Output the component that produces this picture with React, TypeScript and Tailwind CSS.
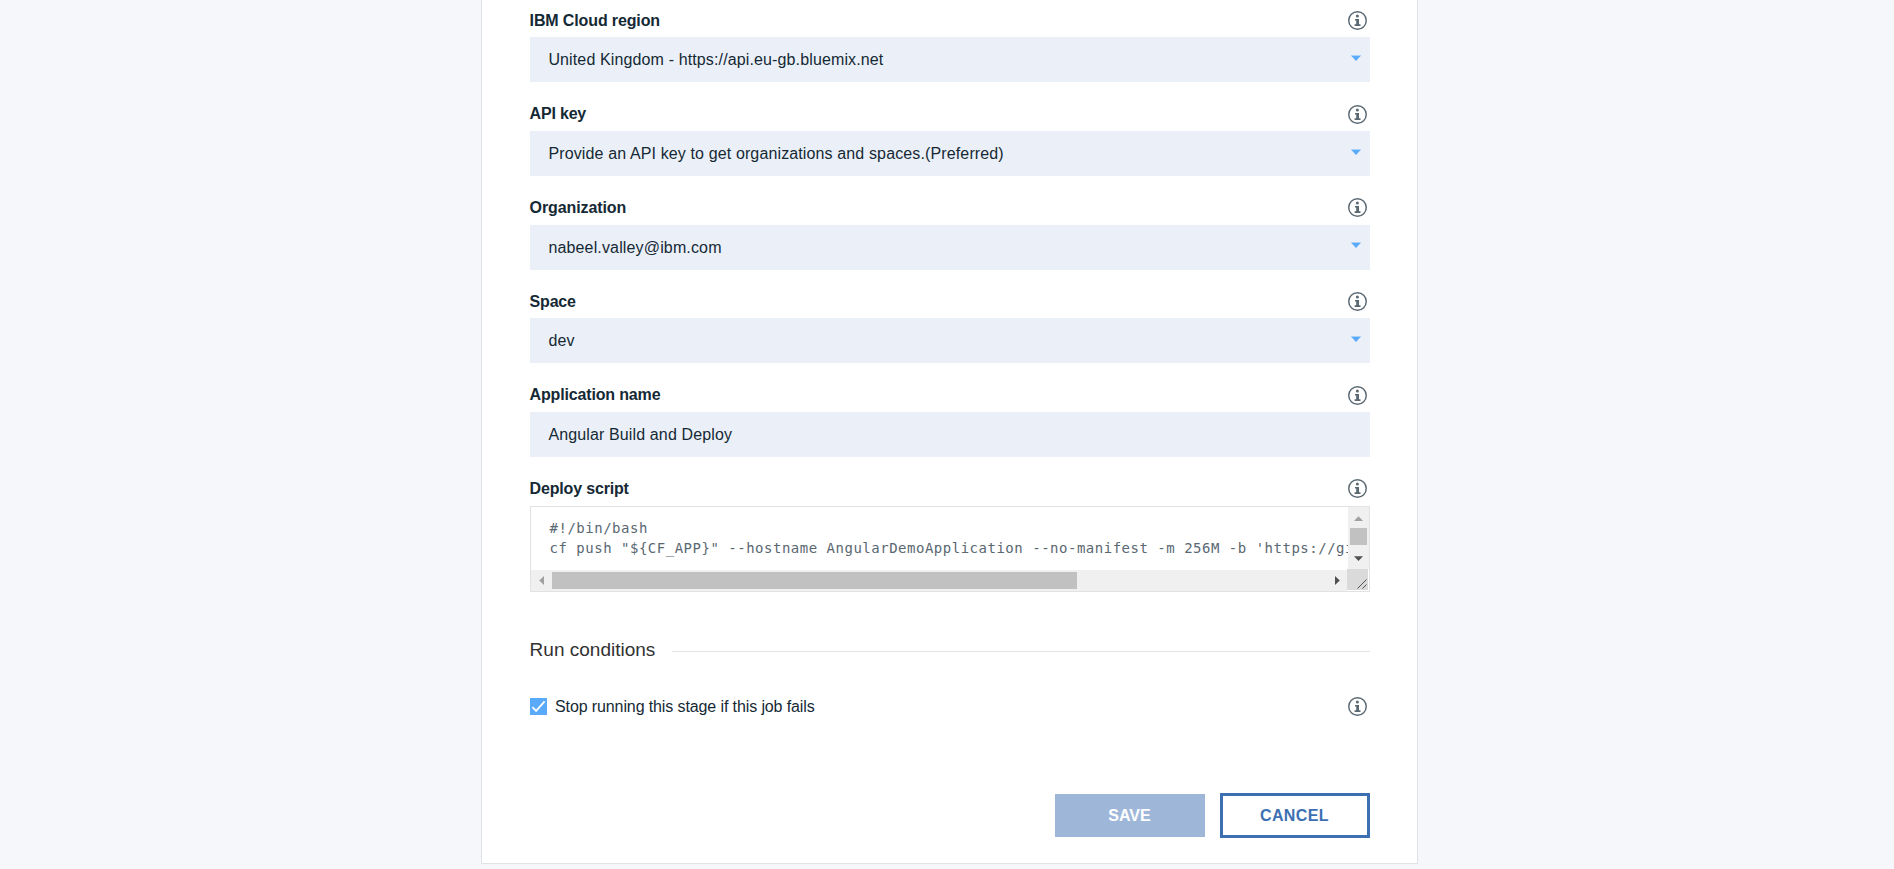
import React from 'react';

function InfoIcon({ className = '' }: { className?: string }) {
  return (
    <svg width="19" height="19" viewBox="0 0 19 19" className={`block shrink-0 ${className}`} fill="#5a6872">
      <circle cx="9.5" cy="9.5" r="8.75" fill="none" stroke="#5a6872" strokeWidth="1.45" />
      <circle cx="9.4" cy="5" r="1.5" />
      <path d="M7 7.9h4v5.3h1.5V15H6.6v-1.8h1.6V9.6H7z" />
    </svg>
  );
}

function Caret() {
  return (
    <svg width="10" height="6" viewBox="0 0 10 6" className="block shrink-0" fill="#5aaafa">
      <rect width="10" height="1" fillOpacity="0.45" />
      <path d="M0.4 1h9.2L5 6z" />
    </svg>
  );
}

type LabelProps = {
  label: string;
  labelClass: string;
  iconClass?: string;
};

type FieldProps = LabelProps & {
  value: string;
  valueClass?: string;
  select?: boolean;
};

function LabelRow({ label, labelClass, iconClass }: LabelProps) {
  return (
    <div className="flex h-[37px] items-start justify-between pr-[3px] pt-[10.75px]">
      <label className={`-ml-[0.4px] text-[16px] font-bold leading-[18px] ${labelClass}`}>{label}</label>
      <InfoIcon className={iconClass} />
    </div>
  );
}

function Field({ label, labelClass, value, valueClass = 'tracking-[0.13px]', select = true }: FieldProps) {
  return (
    <div className="h-[93.75px]">
      <LabelRow label={label} labelClass={labelClass} />
      <div className="flex h-[45px] items-start justify-between bg-[#ebf0f8] pl-[18.4px] pr-[9px]">
        <span className={`text-[16px] leading-[45px] ${valueClass}`}>{value}</span>
        {select && (
          <span className="pt-[17.75px]">
            <Caret />
          </span>
        )}
      </div>
    </div>
  );
}

const script = `#!/bin/bash
cf push "\${CF_APP}" --hostname AngularDemoApplication --no-manifest -m 256M -b 'https://github.com`;

function ScriptBox() {
  return (
    <div className="relative flex h-[86px] flex-col border border-[#dfe3e6] bg-white">
      <div className="flex h-[63px]">
        <pre className="min-w-0 flex-1 overflow-hidden pl-[18.5px] pt-[11px] font-['DejaVu_Sans_Mono',monospace] text-[14px] leading-[20px] tracking-[0.51px] text-[#5a6872]">
          {script}
        </pre>
        <div className="flex w-[21px] flex-col bg-[#f0f0f0] pl-[2px]">
          <svg width="17" height="21" viewBox="0 0 17 21" className="block">
            <path d="M4 14L8.5 9.3L13 14z" fill="#a0a0a0" />
          </svg>
          <div className="h-[17px] w-[17px] bg-[#c1c1c1]" />
          <svg width="17" height="21" viewBox="0 0 17 21" className="block">
            <path d="M4 11.2L8.5 16L13 11.2z" fill="#505050" />
          </svg>
        </div>
      </div>
      <div className="flex h-[21px] bg-[#f0f0f0] pt-[2px]">
        <svg width="21" height="17" viewBox="0 0 21 17" className="block shrink-0">
          <path d="M13 4L8.2 8.5L13 13z" fill="#a0a0a0" />
        </svg>
        <div className="h-[17px] w-[525px] bg-[#c1c1c1]" />
        <svg width="21" height="17" viewBox="0 0 21 17" className="ml-[250px] block shrink-0">
          <path d="M8 4L12.8 8.5L8 13z" fill="#505050" />
        </svg>
      </div>
      <div className="absolute bottom-0 right-0 border-b border-r border-white bg-[#dadada]">
        <svg width="21" height="21" viewBox="0 0 21 21" className="block" stroke="#505050" strokeWidth="1">
          <path d="M10.5 19.5l9-9M15.5 19.5l4-4" fill="none" />
        </svg>
      </div>
    </div>
  );
}

export default function App() {
  return (
    <div className="h-[869px] overflow-hidden bg-[#f5f7fb] pl-[481px] font-['Liberation_Sans',Arial,sans-serif] text-[#152935]">
      <main className="flex h-[864px] w-[937px] flex-col border-x border-b border-[#dfe3e6] bg-white pl-[48px] pr-[47px]">
        <Field label="IBM Cloud region" labelClass="mt-[0.75px] tracking-[-0.13px]" value="United Kingdom - https://api.eu-gb.bluemix.net" />
        <Field label="API key" labelClass="mt-[0.5px] tracking-[-0.2px]" value="Provide an API key to get organizations and spaces.(Preferred)" />
        <Field label="Organization" labelClass="mt-[0.75px] tracking-[-0.11px]" value="nabeel.valley@ibm.com" valueClass="tracking-[0.15px]" />
        <Field label="Space" labelClass="mt-[0.75px] tracking-[-0.2px]" value="dev" />
        <Field label="Application name" labelClass="tracking-[-0.16px]" value="Angular Build and Deploy" select={false} />
        <div className="h-[123.25px]">
          <LabelRow label="Deploy script" labelClass="mt-[0.5px] tracking-[-0.17px]" iconClass="-mt-[0.5px]" />
          <ScriptBox />
        </div>

        <div className="mt-[47px] flex h-[22px] items-center gap-[17px]">
          <h2 className="-ml-[0.4px] text-[19px] leading-[22px] text-[#323232]">Run conditions</h2>
          <div className="mt-[3px] h-px flex-1 bg-[#dfe3e6]" />
        </div>

        <div className="mt-[36px] flex h-[19px] items-center justify-between pr-[3px]">
          <label className="flex items-center gap-[8px]">
            <svg width="17" height="17" viewBox="0 0 17 17" className="block">
              <rect width="17" height="17" fill="#5aaafa" />
              <path d="M2.4 9.2L6.1 12.9L14.6 3.4" fill="none" stroke="#fff" strokeWidth="1.8" />
            </svg>
            <span className="text-[16px] leading-[19px] tracking-[-0.11px]">Stop running this stage if this job fails</span>
          </label>
          <InfoIcon />
        </div>

        <div className="mt-[77px] flex items-center justify-end gap-[15px] text-[16px] font-bold">
          <button className="h-[43px] w-[150px] bg-[#9eb7d9] pr-px text-white">SAVE</button>
          <button className="h-[45px] w-[150px] border-[3px] border-[#3d70b2] bg-white pr-px tracking-[0.4px] text-[#3d70b2]">CANCEL</button>
        </div>
      </main>
    </div>
  );
}
